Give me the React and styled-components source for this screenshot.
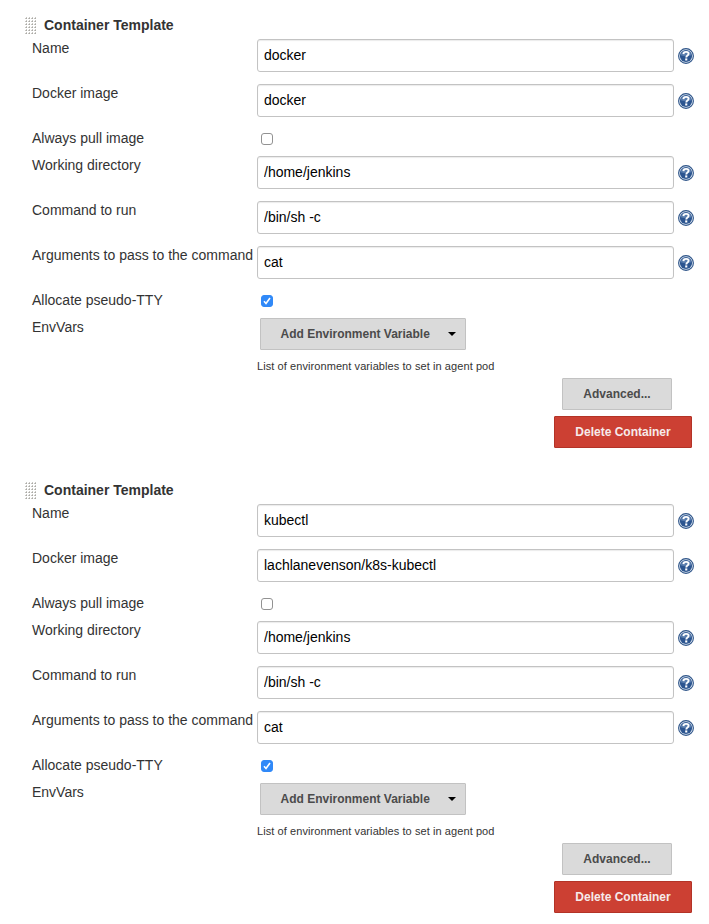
import React from "react";
import styled, { createGlobalStyle, css } from "styled-components";

const GlobalStyle = createGlobalStyle`
  body { margin: 0; background: #fff; }
  *, *::before, *::after { box-sizing: border-box; }
`;

const Page = styled.main`
  width: 709px;
  height: 924px;
  overflow: hidden;
  padding-top: 12px;
  font-family: "Liberation Sans", Arial, sans-serif;
  font-size: 14px;
  color: #333;
`;

const Section = styled.section`
  height: 465px;
  padding-left: 25px;
  display: flex;
  flex-direction: column;
`;

const Heading = styled.header`
  height: 27px;
  display: flex;
  gap: 7px;
`;

const Grip = styled.svg`
  width: 12px;
  height: 18px;
  margin-top: 5px;
`;

const Title = styled.h2`
  margin: 4px 0 0;
  font-size: 14px;
  line-height: 18px;
  font-weight: 700;
  white-space: nowrap;
`;

const Row = styled.div`
  display: grid;
  grid-template-columns: 225px 417px 1fr;
  height: ${(p) => (p.$compact ? 27 : 45)}px;
  margin-left: 7px;
`;

const Label = styled.label`
  line-height: 18px;
  white-space: nowrap;
`;

const TextInput = styled.input`
  width: 417px;
  height: 33px;
  padding: 0 6px 1px;
  border: 1px solid #c3c3c3;
  border-radius: 3px;
  box-shadow: inset 0 1px 1px rgba(0, 0, 0, 0.08);
  background: #fff;
  font: inherit;
  color: #000;
  outline: none;
`;

const HelpIcon = styled.svg`
  width: 16px;
  height: 16px;
  margin: 9px 0 0 4px;
`;

const CheckBox = styled.span`
  display: block;
  width: 12px;
  height: 12px;
  margin: 4px 0 0 4px;
  border: 1px solid ${(p) => (p.$checked ? "#3089f8" : "#929292")};
  border-radius: 3px;
  background: ${(p) => (p.$checked ? "#3089f8" : "#fff")};

  svg { display: block; width: 10px; height: 10px; }
`;

const tones = {
  neutral: css`
    color: #4b4b4b;
    background: #dadada;
    border-color: #c2c2c2;
  `,
  danger: css`
    color: #f6eaea;
    background: #cc4033;
    border-color: #b33327;
  `,
};

const Button = styled.button`
  display: flex;
  align-items: center;
  justify-content: center;
  width: ${(p) => p.$width}px;
  height: 32px;
  padding: 0;
  border: 1px solid;
  border-radius: 1px;
  font-family: inherit;
  font-size: 12px;
  font-weight: 700;
  white-space: nowrap;
  ${(p) => tones[p.$tone]}
`;

const MenuButton = styled(Button)`
  justify-content: space-between;
  padding: 0 9px 0 19.5px;
  margin-left: 3px;
`;

const Caret = styled.svg`
  width: 8px;
  height: 4px;
`;

const Environment = styled(Row)`
  height: 60px;
`;

const Description = styled.div`
  margin-top: 9px;
  font-size: 11px;
  line-height: 14px;
  letter-spacing: 0.08px;
  white-space: nowrap;
`;

const Actions = styled.footer`
  display: flex;
  flex-direction: column;
  align-items: flex-end;
  gap: 6px;
  padding-right: 17px;

  button:first-child { margin-right: 20px; }
`;

const Help = () => (
  <HelpIcon viewBox="0 0 16 16" role="img" aria-label="Help">
    <circle cx="8" cy="8" r="7.4" fill="#dfe8f2" stroke="#2f5589" strokeWidth="1.1" />
    <circle cx="8" cy="8" r="6.1" fill="#2c5590" />
    <path d="M2.6 7.2a5.5 5.5 0 0 1 10.8 0Q8 9.4 2.6 7.2Z" fill="#7898c2" opacity="0.6" />
    <path d="M5.4 6.1C5.5 4.5 6.6 3.9 8.1 3.9c1.5 0 2.5.7 2.5 1.9 0 1.7-2.3 1.6-2.3 3.6" fill="none" stroke="#fff" strokeWidth="1.9" />
    <rect x="7.2" y="10.4" width="2.1" height="2.1" fill="#fff" />
  </HelpIcon>
);

const DragHandle = () => (
  <Grip viewBox="0 0 12 18" aria-hidden="true">
    {Array.from({ length: 24 }, (_, i) => {
      const x = (i % 4) * 3;
      const y = Math.floor(i / 4) * 3;
      return (
        <g key={i}>
          <rect x={x} y={y + 1} width="1" height="1" fill="#c8c7c3" />
          <rect x={x + 1} y={y} width="1" height="1" fill="#c8c7c3" />
          <rect x={x + 1} y={y + 1} width="1" height="1" fill="#aaa9a5" />
        </g>
      );
    })}
  </Grip>
);

const Field = ({ label, value }) => (
  <Row>
    <Label>{label}</Label>
    <TextInput aria-label={label} defaultValue={value} spellCheck={false} />
    <Help />
  </Row>
);

const CheckField = ({ label, checked }) => (
  <Row $compact>
    <Label>{label}</Label>
    <CheckBox $checked={checked} role="checkbox" aria-label={label} aria-checked={!!checked}>
      {checked && (
        <svg viewBox="0 0 10 10">
          <path d="m2 5.3 2 2.2L8 2.1" fill="none" stroke="#fff" strokeWidth="1.6" />
        </svg>
      )}
    </CheckBox>
  </Row>
);

const ContainerTemplate = ({ name, image }) => (
  <Section>
    <Heading>
      <DragHandle />
      <Title>Container Template</Title>
    </Heading>
    <Field label="Name" value={name} />
    <Field label="Docker image" value={image} />
    <CheckField label="Always pull image" />
    <Field label="Working directory" value="/home/jenkins" />
    <Field label="Command to run" value="/bin/sh -c" />
    <Field label="Arguments to pass to the command" value="cat" />
    <CheckField label="Allocate pseudo-TTY" checked />
    <Environment>
      <Label>EnvVars</Label>
      <div>
        <MenuButton $width={206} $tone="neutral">
          Add Environment Variable
          <Caret viewBox="0 0 8 4"><path d="M0 0h8L4 4Z" fill="#000" /></Caret>
        </MenuButton>
        <Description>List of environment variables to set in agent pod</Description>
      </div>
    </Environment>
    <Actions>
      <Button $width={110} $tone="neutral">Advanced...</Button>
      <Button $width={138} $tone="danger">Delete Container</Button>
    </Actions>
  </Section>
);

export default function App() {
  return (
    <>
      <GlobalStyle />
      <Page>
        <ContainerTemplate name="docker" image="docker" />
        <ContainerTemplate name="kubectl" image="lachlanevenson/k8s-kubectl" />
      </Page>
    </>
  );
}
